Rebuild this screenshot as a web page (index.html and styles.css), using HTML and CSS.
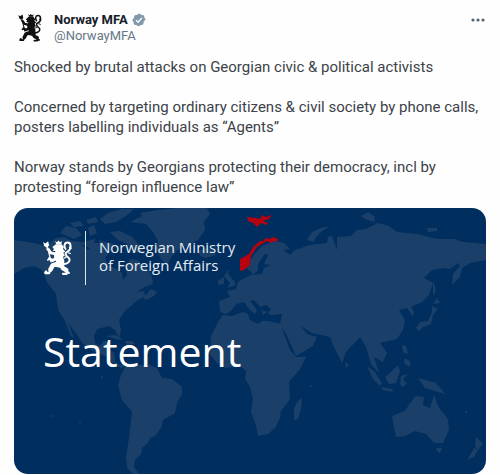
FILE: index.html
```
<!DOCTYPE html>
<html lang="en">
<head>
    <meta charset="UTF-8">
    <meta name="viewport" content="width=device-width, initial-scale=1.0">
    <title>Norway MFA</title>
    <link rel="stylesheet" href="styles.css">
</head>
<body>
    <svg class="defs" aria-hidden="true">
        <symbol id="lion" viewBox="0 0 90 108">
            <g fill="none" stroke="currentColor" stroke-linecap="round" stroke-linejoin="round">
                <path stroke-width="4" d="M12 12L25 66"/>
                <path stroke-width="9" d="M42 42L24 38L17 28M42 54L30 62L20 56"/>
                <path stroke-width="5" d="M17 28l-5-2M20 56l-5 4"/>
                <path stroke-width="6" d="M58 72C76 76 88 62 80 54C70 46 66 38 76 34C90 26 88 6 76 6C66 6 64 18 70 26"/>
                <path stroke-width="4" d="M82 20l5 4M79 38l6 2M72 50l-5 4"/>
                <path stroke-width="14" d="M44 72L30 77L23 90M56 74L62 86L72 91"/>
                <path stroke-width="7" d="M22 92L19 101L8 101M10 96l-3 4M74 92L73 103L62 103M74 96l6 4"/>
            </g>
            <g fill="currentColor">
                <path d="M0 4L7 9L16 2L19 15L11 22L4 17Z"/>
                <path d="M38 1L43 5L48 0L53 5L59 1L57 11H41Z"/>
                <path d="M40 11L58 11L65 20L62 26L69 34L63 38L68 47L62 50L66 62L66 78L52 84L36 80L42 68L35 56L34 42L39 33L30 31L34 26L29 20Z"/>
            </g>
        </symbol>
    </svg>

    <article class="post">
        <header class="post-header">
            <a class="avatar" href="#" aria-label="Norway MFA">
                <svg class="avatar-lion"><use href="#lion"/></svg>
            </a>
            <div class="author">
                <div class="name-row">
                    <a class="name" href="#">Norway MFA</a>
                    <svg class="badge" viewBox="1 1 20 20" role="img" aria-label="Verified account">
                        <path fill="#829aab" d="M20.400 11c0-.6-.2-1.200-.5-1.700s-.8-.9-1.300-1.200c.2-.6.2-1.200.1-1.800s-.4-1.100-.8-1.600c-.5-.4-1-.7-1.600-.8s-1.200-.1-1.800.1c-.3-.5-.7-1-1.200-1.300S11.600 2.200 11 2.200s-1.200.2-1.700.5-.9.800-1.200 1.300c-.6-.2-1.200-.2-1.800-.1s-1.100.4-1.600.8c-.4.5-.7 1-.8 1.600s-.1 1.200.1 1.800c-.5.300-1 .7-1.300 1.200S1.600 10.400 1.600 11s.2 1.200.5 1.700.8.900 1.300 1.200c-.2.600-.2 1.200-.1 1.800s.4 1.100.8 1.600c.5.400 1 .7 1.600.8s1.200.1 1.800-.1c.3.500.7 1 1.200 1.300s1.100.5 1.700.5 1.200-.2 1.700-.5.900-.8 1.200-1.300c.6.200 1.200.2 1.800.1s1.100-.4 1.600-.8c.4-.5.7-1 .8-1.600s.1-1.200-.1-1.800c.5-.3 1-.7 1.300-1.200s.5-1.100.5-1.700z"/>
                        <path fill="none" stroke="#fff" stroke-width="2" d="M6.800 11.300L9.800 14.200L15 8"/>
                    </svg>
                </div>
                <a class="handle" href="#">@NorwayMFA</a>
            </div>
            <button class="more" type="button" aria-label="More">
                <svg viewBox="0 0 16 16">
                    <circle cx="3" cy="8" r="1.600"/>
                    <circle cx="8" cy="8" r="1.600"/>
                    <circle cx="13" cy="8" r="1.600"/>
                </svg>
            </button>
        </header>

        <div class="post-text">
            <p>Shocked by brutal attacks on Georgian civic &amp; political activists</p>
            <p>Concerned by targeting ordinary citizens &amp; civil society by phone calls, posters labelling individuals as “Agents”</p>
            <p>Norway stands by Georgians protecting their democracy, incl by protesting “foreign influence law”</p>
        </div>

        <section class="card">
            <svg class="map" viewBox="0 0 472 266" preserveAspectRatio="xMidYMid slice" aria-hidden="true">
                <g class="land">
                    <!-- North America -->
                    <path d="M0 32L20 35L32 38L42 30L50 29L58 33L70 34L80 31L92 34L100 36L96 43L91 50L94 57L103 61L108 65L109 72L113 67L112 60L116 51L124 52L129 58L134 61L138 69L139 76L130 79L123 84L130 83L131 88L137 81L143 84L140 88L132 92L129 89L121 94L118 97L110 104L105 112L107 122L105 130L101 122L95 118L83 121L80 128L81 135L86 138L90 133L96 133L94 141L100 145L101 154L106 157L111 157L107 160L99 155L92 148L79 143L69 136L62 125L54 115L60 130L57 128L50 111L44 102L42 86L33 74L28 62L20 58L10 60L0 66Z"/>
                    <path d="M46 25L52 18L62 20L68 27L60 31ZM56 15L66 13L70 18L60 19ZM74 20L80 17L83 25L76 28ZM86 11L94 5L108 1L120 1L112 8L102 14L91 16ZM96 24L106 23L118 29L126 38L130 46L120 44L113 36L104 32ZM72 12L82 9L84 14L74 16Z"/>
                    <path d="M92 128L101 127L110 132L102 131ZM111 133L119 133L121 136L113 137Z"/>
                    <!-- Greenland and Iceland -->
                    <path d="M116 14L128 8L126 5L144 2L164 0L193 0L196 6L190 14L191 22L184 32L174 37L164 42L158 48L153 57L147 51L142 41L144 33L139 24L132 16Z"/>
                    <path d="M184 43L192 40L200 42L202 47L192 50L186 48Z"/>
                    <!-- South America -->
                    <path d="M111 159L118 155L126 157L136 157L143 160L148 170L158 171L168 179L168 186L163 195L161 205L149 212L147 220L141 228L136 230L134 235L128 240L127 246L121 252L120 259L125 266L119 266L113 260L112 249L115 230L118 204L108 192L104 177L107 167Z"/>
                    <!-- Europe and Asia -->
                    <path d="M205 93L206 103L211 106L217 103L222 96L230 94L235 101L241 106L243 102L236 93L240 92L247 100L249 107L253 104L257 107L268 106L266 116L272 126L282 148L299 138L303 129L293 126L287 118L298 125L316 129L319 137L328 155L332 144L346 129L352 139L357 156L365 165L360 149L369 154L373 145L366 135L383 131L389 122L391 112L385 102L393 100L399 109L400 104L397 99L408 94L415 87L419 75L410 70L418 62L429 60L436 61L444 55L446 58L439 66L438 77L446 69L448 60L456 55L472 52V36L449 34L440 31L423 31L403 26L383 24L375 18L364 15L352 21L343 22L337 28L323 29L323 42L318 28L314 29L313 35L296 37L281 42L276 47L269 42L276 41L270 35L260 33L248 38L239 48L232 59L239 66L231 70L224 74L222 81L213 83L216 89Z"/>
                    <path d="M293 32L298 24L307 20L316 18L308 23L302 29L300 34ZM347 8L354 4L361 9L360 14L351 11ZM413 20L423 20L423 23L414 24Z"/>
                    <!-- British Isles -->
                    <path d="M210 68L216 60L214 66L220 73L222 77L213 80L216 75ZM204 73L210 69L210 76L204 77Z"/>
                    <!-- Africa and Madagascar -->
                    <path d="M209 107L218 108L229 104L234 106L236 112L244 116L248 113L254 113L267 116L270 126L276 142L282 149L292 149L286 161L275 174L276 191L267 203L266 210L261 220L254 226L244 228L242 217L237 204L239 191L236 179L231 171L232 163L226 158L211 160L203 155L196 146L197 128L204 114Z"/>
                    <path d="M280 201L283 194L288 190L287 201L284 211L280 212Z"/>
                    <!-- Japan -->
                    <path d="M402 120L406 114L414 113L418 104L418 98L424 101L419 107L417 116L409 119L405 123ZM419 96L423 90L426 95ZM419 88L419 73L422 82Z"/>
                    <!-- South-East Asia -->
                    <path d="M353 158L360 163L368 175L366 178L359 171ZM367 179L378 181L379 184L369 182ZM371 169L378 163L384 157L386 163L382 175L375 176ZM387 168L394 166L389 171L393 176L388 179L386 176ZM388 137L392 138L394 146L389 144ZM391 150L397 154L395 159L390 155ZM404 170L412 172L422 175L431 186L421 183L411 180ZM331 154L335 157L332 160Z"/>
                    <!-- Australia and New Zealand -->
                    <path d="M378 208L391 203L396 195L402 188L410 189L409 197L416 200L420 187L425 200L434 211L435 222L429 235L420 235L412 226L401 223L391 228L382 229L380 219ZM422 240L428 240L426 245L423 243ZM462 229L466 233L469 236L464 242L461 238ZM460 240L455 249L453 252L460 249L464 242Z"/>
                    <circle cx="88" cy="169" r="1"/>
                    <circle cx="297" cy="178" r="1"/>
                    <circle cx="452" cy="204" r="1"/>
                    <circle cx="37" cy="208" r="1"/>
                    <circle cx="66" cy="214" r="1"/>
                </g>
                <g class="sea">
                    <path d="M251 46L254 47L250 56L257 57L250 60L248 66L239 67L244 62L244 56ZM246 99L252 97L257 101L255 104L249 103ZM66 36L76 40L74 42ZM82 28L86 35L80 35Z"/>
                </g>
                <g class="norway">
                    <path d="M226 51L235 46L239 39L246 33L249 33L252 30L256 31L259 29L264 31L263 34L259 33L257 35L253 33L248 36L243 39L237 48L236 57L230 62L226 63Z"/>
                    <path d="M233 9L242 10L246 11L248 7L252 9L258 7L255 11L249 13L254 15L252 17L247 15L243 19L239 15L234 13Z"/>
                </g>
            </svg>
            <div class="brand">
                <svg class="brand-lion" aria-hidden="true"><use href="#lion"/></svg>
                <p class="brand-name">Norwegian Ministry<br>of Foreign Affairs</p>
            </div>
            <h1 class="card-title">Statement</h1>
        </section>
    </article>
</body>
</html>
```
FILE: styles.css
```
* {
    box-sizing: border-box;
}
body {
    margin: 0;
    background-color: #fefefe;
    color: #3c4248;
    font-family: Roboto, "Liberation Sans", sans-serif;
}
p, h1 {
    margin: 0;
}
a {
    color: inherit;
    text-decoration: none;
}
.defs {
    display: none;
}
.post {
    padding: 12px 14px 0;
}
.post-header {
    display: flex;
    gap: 8px;
}
.avatar {
    display: flex;
    align-items: center;
    justify-content: center;
    width: 32px;
    height: 32px;
    color: #111;
}
.avatar-lion {
    width: 24px;
    height: 28px;
}
.author {
    flex: 1;
    font-size: 13px;
    line-height: 16px;
}
.name-row {
    display: flex;
    align-items: center;
    gap: 4px;
}
.name {
    color: #17202a;
    font-weight: 700;
}
.badge {
    width: 14px;
    height: 14px;
}
.handle {
    color: #657786;
}
.more {
    width: 16px;
    height: 16px;
    padding: 0;
    border: none;
    background: none;
    cursor: pointer;
}
.more svg {
    display: block;
    fill: #536471;
}
.post-text {
    display: flex;
    flex-direction: column;
    gap: 20px;
    margin: 13px 0 11px;
    font-size: 15px;
    line-height: 20px;
}
.card {
    position: relative;
    aspect-ratio: 472 / 266;
    padding: 23px 29px;
    overflow: hidden;
    border-radius: 14px;
    background-color: #002e5f;
    color: #fff;
    font-family: "Open Sans", "Noto Sans", sans-serif;
}
.map {
    position: absolute;
    inset: 0;
    width: 100%;
    height: 100%;
}
.land {
    fill: #1a4069;
}
.sea {
    fill: #002e5f;
}
.norway {
    fill: #b5040f;
}
.brand {
    position: relative;
    display: flex;
    align-items: center;
    gap: 13px;
}
.brand-lion {
    width: 29px;
    height: 36px;
}
.brand-name {
    padding: 7px 0 11px 13px;
    border-left: 1px solid #dfe6ed;
    color: #e6ecf2;
    font-size: 15px;
    line-height: 18px;
}
.card-title {
    position: relative;
    margin-top: 39px;
    font-size: 41px;
    font-weight: 400;
    line-height: 54px;
}
```
